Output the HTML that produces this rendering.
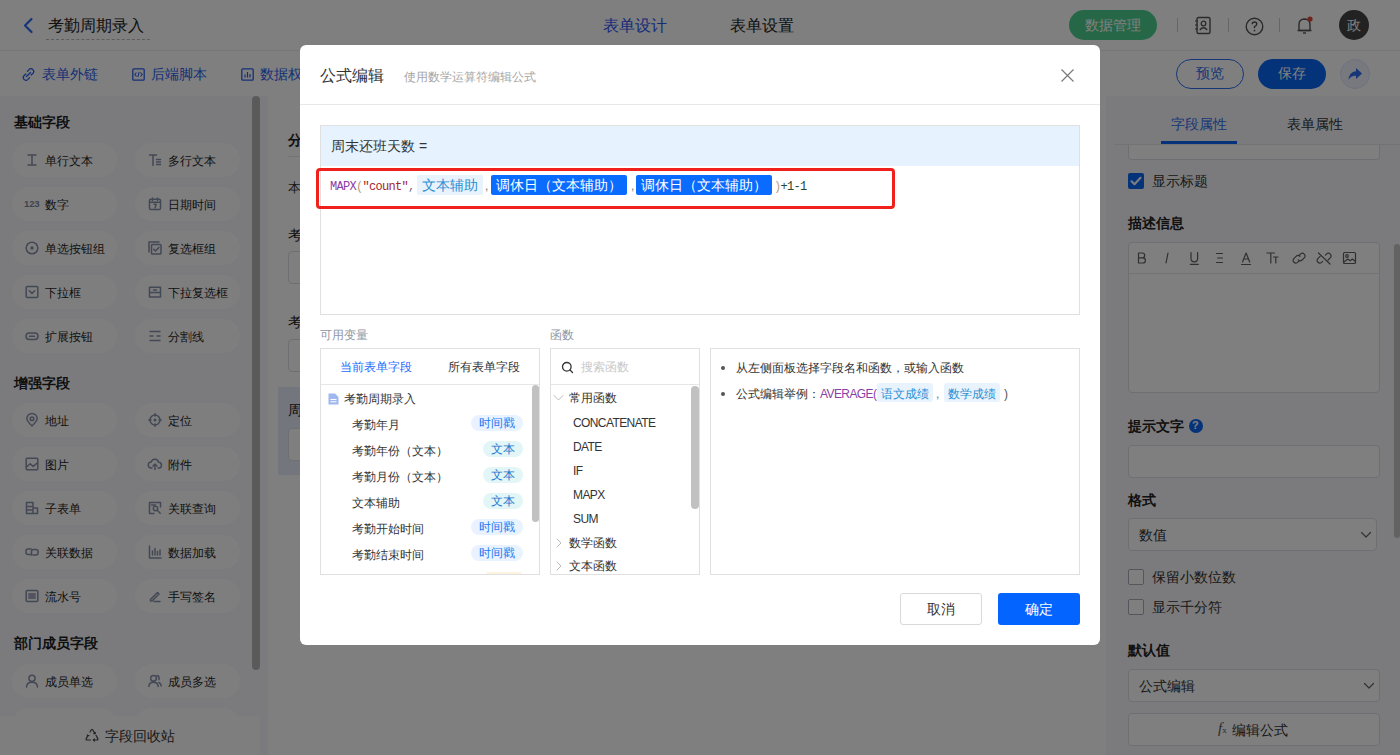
<!DOCTYPE html>
<html><head><meta charset="utf-8">
<style>
*{margin:0;padding:0;box-sizing:border-box}
html,body{width:1400px;height:755px;overflow:hidden;background:#fff;font-family:"Liberation Sans",sans-serif;color:#333}
.a{position:absolute}
.t{position:absolute;white-space:nowrap;line-height:1}
#page{position:absolute;left:0;top:0;width:1400px;height:755px;background:#fff}
#hdr{left:0;top:0;width:1400px;height:51px;border-bottom:1px solid #ececec;background:#fff}
#tb{left:0;top:0;width:1400px;height:96px}
#lp{left:0;top:96px;width:268px;height:659px;background:#f6f7fb}
.sec{font-size:14px;font-weight:bold;color:#1f1f1f}
.pill{position:absolute;width:105px;height:34px;border-radius:17px;background:#fdfdfe}
.pill span{position:absolute;left:33px;top:11px;font-size:12px;line-height:14px;color:#1f1f1f;white-space:nowrap}
.pill svg{position:absolute;left:13px;top:10px;overflow:visible}
#rp{left:1106px;top:96px;width:294px;height:659px;background:#f6f7fb}
#ov{left:0;top:0;width:1400px;height:755px;background:rgba(0,0,0,.5)}
#modal{left:300px;top:45px;width:800px;height:600px;background:#fff;border-radius:6px}
.badge{position:absolute;height:16px;border-radius:8px;font-size:12px;line-height:16px;text-align:center}
.bt{background:#e8f3ff;color:#1e78f0}
.bx{background:#e3f6f7;color:#1e78d0}
</style></head><body>
<div id="page">
  <div id="hdr" class="a">
    <svg class="a" style="left:21px;top:17px" width="14" height="17" viewBox="0 0 14 17"><path d="M10.5 2 L4 8.5 L10.5 15" fill="none" stroke="#2b6cf0" stroke-width="2.2" stroke-linecap="round" stroke-linejoin="round"/></svg>
    <div class="t" style="left:48px;top:18px;font-size:16px;color:#222">考勤周期录入</div>
    <div class="a" style="left:46px;top:39px;width:104px;border-top:1px dashed #bbb"></div>
    <div class="t" style="left:603px;top:18px;font-size:16px;color:#2f55f2">表单设计</div>
    <div class="t" style="left:730px;top:18px;font-size:16px;color:#222">表单设置</div>
    <div class="a" style="left:1069px;top:10px;width:88px;height:30px;border-radius:15px;background:#4ccf8e"></div>
    <div class="t" style="left:1085px;top:18px;font-size:14px;color:#fff">数据管理</div>
    <div class="a" style="left:1177px;top:18px;width:1px;height:14px;background:#ccc"></div>
    <div class="a" style="left:1228px;top:18px;width:1px;height:14px;background:#ccc"></div>
    <div class="a" style="left:1279px;top:18px;width:1px;height:14px;background:#ccc"></div>
    <svg class="a" style="left:1193px;top:16px" width="20" height="19" viewBox="0 0 20 19"><rect x="4" y="1.5" width="13" height="16" rx="1.5" fill="none" stroke="#555" stroke-width="1.4"/><circle cx="10.5" cy="7.5" r="2.3" fill="none" stroke="#555" stroke-width="1.3"/><path d="M6.8 14 Q10.5 9.5 14.2 14" fill="none" stroke="#555" stroke-width="1.3"/><path d="M2 5h3M2 9h3M2 13h3" stroke="#555" stroke-width="1.2"/></svg>
    <svg class="a" style="left:1245px;top:17px" width="19" height="19" viewBox="0 0 19 19"><circle cx="9.5" cy="9.5" r="8.3" fill="none" stroke="#555" stroke-width="1.4"/><path d="M7.2 7.3 Q7.2 5 9.5 5 Q11.8 5 11.8 7.1 Q11.8 8.6 9.5 9.6 L9.5 11.3" fill="none" stroke="#555" stroke-width="1.4"/><circle cx="9.5" cy="13.6" r="0.9" fill="#555"/></svg>
    <svg class="a" style="left:1296px;top:15px" width="18" height="20" viewBox="0 0 18 20"><path d="M3 15.5 L3 9.5 Q3 4.2 8.5 4 Q14 4.2 14 9.5 L14 15.5 Z" fill="none" stroke="#555" stroke-width="1.4" stroke-linejoin="round"/><path d="M1.5 15.5 H15.5" stroke="#555" stroke-width="1.4"/><path d="M7 18 H10" stroke="#555" stroke-width="1.4"/><circle cx="14" cy="4" r="2.6" fill="#e0443a"/></svg>
    <div class="a" style="left:1339px;top:10px;width:30px;height:30px;border-radius:15px;background:#444"></div>
    <div class="t" style="left:1347px;top:18px;font-size:14px;color:#fff">政</div>
  </div>
  <div id="tb" class="a">
    <svg class="a" style="left:22px;top:68px" width="13" height="13" viewBox="0 0 13 13"><path d="M5.5 3.2 L7.3 1.4 Q9 -0.2 10.9 1.6 Q12.6 3.5 11 5.2 L9.2 7 M7.5 9.8 L5.7 11.6 Q4 13.2 2.1 11.4 Q0.4 9.5 2 7.8 L3.8 6 M4.5 8.5 L8.5 4.5" fill="none" stroke="#2a5fec" stroke-width="1.3" stroke-linecap="round"/></svg>
    <div class="t" style="left:42px;top:67px;font-size:14px;color:#2a5fec">表单外链</div>
    <svg class="a" style="left:132px;top:68px" width="13" height="13" viewBox="0 0 13 13"><rect x="0.8" y="0.8" width="11.4" height="11.4" rx="1" fill="none" stroke="#2a5fec" stroke-width="1.3"/><path d="M4.5 4.5 L2.8 6.5 L4.5 8.5 M8.5 4.5 L10.2 6.5 L8.5 8.5 M7.2 3.8 L5.8 9.2" fill="none" stroke="#2a5fec" stroke-width="1.1"/></svg>
    <div class="t" style="left:151px;top:67px;font-size:14px;color:#2a5fec">后端脚本</div>
    <svg class="a" style="left:241px;top:68px" width="13" height="13" viewBox="0 0 13 13"><rect x="0.8" y="0.8" width="11.4" height="11.4" rx="1" fill="none" stroke="#2a5fec" stroke-width="1.3"/><path d="M4 9.5V6.5M6.5 9.5V4M9 9.5V6" stroke="#2a5fec" stroke-width="1.2"/></svg>
    <div class="t" style="left:260px;top:67px;font-size:14px;color:#2a5fec">数据权限</div>
    <div class="a" style="left:1176px;top:59px;width:68px;height:30px;border-radius:15px;border:1.5px solid #2f6cf0"></div>
    <div class="t" style="left:1196px;top:66px;font-size:14px;color:#2f6cf0">预览</div>
    <div class="a" style="left:1258px;top:59px;width:68px;height:30px;border-radius:15px;background:#0a66f5"></div>
    <div class="t" style="left:1278px;top:66px;font-size:14px;color:#fff">保存</div>
    <div class="a" style="left:1340px;top:59px;width:30px;height:30px;border-radius:15px;background:#eef3fe;border:1px solid #d9e4fb"></div>
    <svg class="a" style="left:1347px;top:66px" width="16" height="16" viewBox="0 0 16 16"><path d="M9 2 L15 7.5 L9 13 L9 9.8 Q4 9.5 1.5 14 Q2 6 9 5.2 Z" fill="#2f6cf0"/></svg>
  </div>
  <div id="lp" class="a">
<div class="t sec" style="left:14px;top:19px">基础字段</div>
<div class="pill" style="left:12px;top:47px"><svg width="14" height="14" viewBox="0 0 14 14"><path d="M3 2h8M3 12h8M7 2v10" fill="none" stroke="#8790aa" stroke-width="1.5" stroke-linecap="round" stroke-linejoin="round"/></svg><span>单行文本</span></div>
<div class="pill" style="left:135px;top:47px"><svg width="14" height="14" viewBox="0 0 14 14"><path d="M1.5 2h7M5 2v10.5M8.5 6.5h4M8.5 9h4M8.5 11.5h4" fill="none" stroke="#8790aa" stroke-width="1.5" stroke-linecap="round" stroke-linejoin="round"/></svg><span>多行文本</span></div>
<div class="pill" style="left:12px;top:91px"><svg width="14" height="14" viewBox="0 0 14 14"><text x="-1" y="10.3" font-size="9.6" font-weight="700" fill="#7d86a0" font-family="Liberation Sans" letter-spacing="-0.2">123</text></svg><span>数字</span></div>
<div class="pill" style="left:135px;top:91px"><svg width="14" height="14" viewBox="0 0 14 14"><rect x="1.5" y="2.2" width="11" height="10.3" rx="1.2" fill="none" stroke="#8790aa" stroke-width="1.5" stroke-linecap="round" stroke-linejoin="round"/><path d="M1.5 5.2h11M4.5 1v2.4M9.5 1v2.4M6 7.3h2.2l-1.2 3.6" fill="none" stroke="#8790aa" stroke-width="1.5" stroke-linecap="round" stroke-linejoin="round"/></svg><span>日期时间</span></div>
<div class="pill" style="left:12px;top:135px"><svg width="14" height="14" viewBox="0 0 14 14"><circle cx="7" cy="7" r="5.8" fill="none" stroke="#8790aa" stroke-width="1.5" stroke-linecap="round" stroke-linejoin="round"/><circle cx="7" cy="7" r="1.7" fill="#8790aa"/></svg><span>单选按钮组</span></div>
<div class="pill" style="left:135px;top:135px"><svg width="14" height="14" viewBox="0 0 14 14"><path d="M1 11V1h10" fill="none" stroke="#8790aa" stroke-width="1.5" stroke-linecap="round" stroke-linejoin="round"/><rect x="3.5" y="3.5" width="9.5" height="9.5" rx="0.8" fill="none" stroke="#8790aa" stroke-width="1.5" stroke-linecap="round" stroke-linejoin="round"/><path d="M5.7 8.2l1.8 1.8 3.4-3.6" fill="none" stroke="#8790aa" stroke-width="1.5" stroke-linecap="round" stroke-linejoin="round"/></svg><span>复选框组</span></div>
<div class="pill" style="left:12px;top:179px"><svg width="14" height="14" viewBox="0 0 14 14"><rect x="1.2" y="1.5" width="11.6" height="11" rx="1" fill="none" stroke="#8790aa" stroke-width="1.5" stroke-linecap="round" stroke-linejoin="round"/><path d="M4.3 5.8l2.7 2.6 2.7-2.6" fill="none" stroke="#8790aa" stroke-width="1.5" stroke-linecap="round" stroke-linejoin="round"/></svg><span>下拉框</span></div>
<div class="pill" style="left:135px;top:179px"><svg width="14" height="14" viewBox="0 0 14 14"><path d="M1.5 7.5V2.3h11v5.2M1.5 7.5h11v4.5h-11z" fill="none" stroke="#8790aa" stroke-width="1.5" stroke-linecap="round" stroke-linejoin="round"/><path d="M5.5 5h3" fill="none" stroke="#8790aa" stroke-width="1.5" stroke-linecap="round" stroke-linejoin="round"/></svg><span>下拉复选框</span></div>
<div class="pill" style="left:12px;top:223px"><svg width="14" height="14" viewBox="0 0 14 14"><rect x="1" y="4" width="12" height="6.5" rx="3.2" fill="none" stroke="#8790aa" stroke-width="1.5" stroke-linecap="round" stroke-linejoin="round"/><path d="M4.5 7.2h5" fill="none" stroke="#8790aa" stroke-width="1.5" stroke-linecap="round" stroke-linejoin="round"/></svg><span>扩展按钮</span></div>
<div class="pill" style="left:135px;top:223px"><svg width="14" height="14" viewBox="0 0 14 14"><path d="M2 2.5h10M2 7h3M9 7h3M2 11.5h10" fill="none" stroke="#8790aa" stroke-width="1.5" stroke-linecap="round" stroke-linejoin="round"/></svg><span>分割线</span></div>
<div class="t sec" style="left:14px;top:280px">增强字段</div>
<div class="pill" style="left:12px;top:307px"><svg width="14" height="14" viewBox="0 0 14 14"><path d="M7 13Q1.8 8 1.8 5.6A5.2 5.2 0 0 1 12.2 5.6Q12.2 8 7 13Z" fill="none" stroke="#8790aa" stroke-width="1.5" stroke-linecap="round" stroke-linejoin="round"/><circle cx="7" cy="5.7" r="1.8" fill="none" stroke="#8790aa" stroke-width="1.5" stroke-linecap="round" stroke-linejoin="round"/></svg><span>地址</span></div>
<div class="pill" style="left:135px;top:307px"><svg width="14" height="14" viewBox="0 0 14 14"><circle cx="7" cy="7" r="5" fill="none" stroke="#8790aa" stroke-width="1.5" stroke-linecap="round" stroke-linejoin="round"/><circle cx="7" cy="7" r="1.5" fill="#8790aa"/><path d="M7 0.8v2.2M7 11v2.2M0.8 7h2.2M11 7h2.2" fill="none" stroke="#8790aa" stroke-width="1.5" stroke-linecap="round" stroke-linejoin="round"/></svg><span>定位</span></div>
<div class="pill" style="left:12px;top:351px"><svg width="14" height="14" viewBox="0 0 14 14"><rect x="1.2" y="1.2" width="11.6" height="11.6" rx="1" fill="none" stroke="#8790aa" stroke-width="1.5" stroke-linecap="round" stroke-linejoin="round"/><path d="M1.5 10l3.7-3.2 3 2.6 4-3.4" fill="none" stroke="#8790aa" stroke-width="1.5" stroke-linecap="round" stroke-linejoin="round"/></svg><span>图片</span></div>
<div class="pill" style="left:135px;top:351px"><svg width="14" height="14" viewBox="0 0 14 14"><path d="M4 11H3.3A3 3 0 0 1 3.2 5A3.8 3.8 0 0 1 10.6 5.3A2.8 2.8 0 0 1 10.6 11H10M7 12.5V7M5 9L7 7 9 9" fill="none" stroke="#8790aa" stroke-width="1.5" stroke-linecap="round" stroke-linejoin="round"/></svg><span>附件</span></div>
<div class="pill" style="left:12px;top:395px"><svg width="14" height="14" viewBox="0 0 14 14"><path d="M1.5 12.5V1.5h6.5v11M1.5 5.5h6.5M1.5 9h6.5M8 7h4.5v5.5h-11" fill="none" stroke="#8790aa" stroke-width="1.5" stroke-linecap="round" stroke-linejoin="round"/></svg><span>子表单</span></div>
<div class="pill" style="left:135px;top:395px"><svg width="14" height="14" viewBox="0 0 14 14"><path d="M12.5 6V1.5h-11v11H6" fill="none" stroke="#8790aa" stroke-width="1.5" stroke-linecap="round" stroke-linejoin="round"/><circle cx="7.5" cy="7.5" r="2.2" fill="none" stroke="#8790aa" stroke-width="1.5" stroke-linecap="round" stroke-linejoin="round"/><path d="M9.2 9.2l3 3" fill="none" stroke="#8790aa" stroke-width="1.5" stroke-linecap="round" stroke-linejoin="round"/><path d="M3.5 4h4" fill="none" stroke="#8790aa" stroke-width="1.5" stroke-linecap="round" stroke-linejoin="round"/></svg><span>关联查询</span></div>
<div class="pill" style="left:12px;top:439px"><svg width="14" height="14" viewBox="0 0 14 14"><path d="M6 4H3a2 2 0 0 0-2 2v1.5a2 2 0 0 0 2 2h2.5M8 10h3a2 2 0 0 0 2-2V6.5a2 2 0 0 0-2-2H8.5a2 2 0 0 0-2 2V10" fill="none" stroke="#8790aa" stroke-width="1.5" stroke-linecap="round" stroke-linejoin="round"/></svg><span>关联数据</span></div>
<div class="pill" style="left:135px;top:439px"><svg width="14" height="14" viewBox="0 0 14 14"><path d="M1.5 1v12h11.5M4.5 10V6M7 10V3.5M9.5 10V6.5M12 10V5" fill="none" stroke="#8790aa" stroke-width="1.5" stroke-linecap="round" stroke-linejoin="round"/></svg><span>数据加载</span></div>
<div class="pill" style="left:12px;top:483px"><svg width="14" height="14" viewBox="0 0 14 14"><rect x="1.2" y="1.5" width="11.6" height="11" rx="1" fill="none" stroke="#8790aa" stroke-width="1.5" stroke-linecap="round" stroke-linejoin="round"/><path d="M3.8 5h6.4M3.8 7h6.4M3.8 9h6.4" fill="none" stroke="#8790aa" stroke-width="1.5" stroke-linecap="round" stroke-linejoin="round"/></svg><span>流水号</span></div>
<div class="pill" style="left:135px;top:483px"><svg width="14" height="14" viewBox="0 0 14 14"><path d="M2.5 10.5L9.5 3.5 11 5 4 12H2.5ZM6 12.5h6" fill="none" stroke="#8790aa" stroke-width="1.5" stroke-linecap="round" stroke-linejoin="round"/></svg><span>手写签名</span></div>
<div class="t sec" style="left:14px;top:540px">部门成员字段</div>
<div class="pill" style="left:12px;top:568px"><svg width="14" height="14" viewBox="0 0 14 14"><circle cx="7" cy="4.3" r="3.1" fill="none" stroke="#8790aa" stroke-width="1.5" stroke-linecap="round" stroke-linejoin="round"/><path d="M1.5 13Q1.8 8.3 7 8.3Q12.2 8.3 12.5 13" fill="none" stroke="#8790aa" stroke-width="1.5" stroke-linecap="round" stroke-linejoin="round"/></svg><span>成员单选</span></div>
<div class="pill" style="left:135px;top:568px"><svg width="14" height="14" viewBox="0 0 14 14"><circle cx="5.5" cy="4.3" r="2.9" fill="none" stroke="#8790aa" stroke-width="1.5" stroke-linecap="round" stroke-linejoin="round"/><path d="M0.8 12.5Q1.1 8.3 5.5 8.3Q9.9 8.3 10.2 12.5M9 1.6Q11.6 2.2 11 5.6M10.8 8.5Q13 9.3 13.2 12" fill="none" stroke="#8790aa" stroke-width="1.5" stroke-linecap="round" stroke-linejoin="round"/></svg><span>成员多选</span></div>
<div class="pill" style="left:12px;top:612px"><svg width="14" height="14" viewBox="0 0 14 14"></svg><span></span></div>
<div class="pill" style="left:135px;top:612px"><svg width="14" height="14" viewBox="0 0 14 14"></svg><span></span></div>
<div class="a" style="left:252px;top:0;width:8px;height:574px;border-radius:4px;background:#b5b5b5"></div>
<div class="a" style="left:0;top:620px;width:260px;height:39px;background:#fdfdfe"></div>
<svg class="a" style="left:85px;top:633px" width="14" height="13" viewBox="0 0 14 13"><path d="M5 3L6.2 1Q7 0 7.8 1L9.8 4.4M11 6.3L12.8 9.6Q13.2 11 12 11H8.5M5.5 11H2Q0.8 11 1.2 9.6L2.8 6.8" fill="none" stroke="#444" stroke-width="1.2" stroke-linejoin="round" stroke-linecap="round"/><path d="M8.3 4.6l1.7 0.2 0.4-1.8M9.8 9.8L8.3 11l1.5 1.3M2 5.5l0.8 1.4 1.6-0.6" fill="none" stroke="#444" stroke-width="1.1" stroke-linejoin="round"/></svg>
<div class="t" style="left:105px;top:632px;font-size:14px;line-height:16px;color:#333">字段回收站</div>
</div>
  <div class="a" style="left:268px;top:96px;width:838px;height:659px;background:#fff"></div>
  <div class="t" style="left:288px;top:133px;font-size:14px;font-weight:bold;color:#222">分组标题</div>
  <div class="a" style="left:288px;top:156px;width:800px;height:1px;background:#e8e8e8"></div>
  <div class="t" style="left:288px;top:181px;font-size:13px;color:#333">本组</div>
  <div class="t" style="left:288px;top:228px;font-size:14px;color:#1a1a1a">考勤</div>
  <div class="a" style="left:288px;top:251px;width:300px;height:33px;border:1px solid #dcdfe6;border-radius:4px;background:#fff"></div>
  <div class="t" style="left:288px;top:315px;font-size:14px;color:#1a1a1a">考勤</div>
  <div class="a" style="left:288px;top:339px;width:300px;height:33px;border:1px solid #dcdfe6;border-radius:4px;background:#fff"></div>
  <div class="a" style="left:278px;top:387px;width:810px;height:88px;background:#e7edfa"></div>
  <div class="t" style="left:288px;top:403px;font-size:14px;color:#1a1a1a">周末</div>
  <div class="a" style="left:288px;top:428px;width:300px;height:33px;border:1px solid #dcdfe6;border-radius:4px;background:#fff"></div>
  <div id="rp" class="a">
    
    <div class="t" style="left:65px;top:21px;font-size:14px;color:#2f6cf0">字段属性</div>
    <div class="t" style="left:181px;top:21px;font-size:14px;color:#333">表单属性</div>
    <div class="a" style="left:8px;top:48px;width:286px;height:1px;background:#e4e6eb"></div>
    <div class="a" style="left:55px;top:45px;width:76px;height:3px;background:#0a66f5"></div>
    <div class="a" style="left:22px;top:49px;width:252px;height:15px;border:1px solid #dcdfe6;border-top:none;border-radius:0 0 4px 4px;background:#fff"></div>
    <div class="a" style="left:22px;top:77px;width:16px;height:16px;border-radius:2px;background:#0a66f5"></div>
    <svg class="a" style="left:22px;top:77px" width="16" height="16" viewBox="0 0 16 16"><path d="M3.5 8.2l3 3 6-6.5" fill="none" stroke="#fff" stroke-width="2" stroke-linecap="round" stroke-linejoin="round"/></svg>
    <div class="t" style="left:46px;top:78px;font-size:14px;color:#333">显示标题</div>
    <div class="t" style="left:22px;top:120px;font-size:14px;font-weight:bold;color:#222">描述信息</div>
    <div class="a" style="left:22px;top:146px;width:252px;height:151px;border:1px solid #dcdfe6;border-radius:4px;background:#fff"></div>
    <div class="a" style="left:23px;top:177px;width:250px;height:1px;background:#e4e6eb"></div>
    <svg class="a" style="left:22px;top:146px" width="252" height="31" viewBox="0 0 252 31">
      <path d="M10.5 11h3.8a2.4 2.4 0 0 1 0 4.8h-3.8zM10.5 15.8h4.3a2.6 2.6 0 0 1 0 5.2h-4.3z" fill="none" stroke="#606060" stroke-width="1.2" stroke-linecap="round" stroke-linejoin="round"/>
      <path d="M40 11l-2 10" fill="none" stroke="#606060" stroke-width="1.2" stroke-linecap="round" stroke-linejoin="round" stroke-width="1.5"/>
      <path d="M63 10.5v6a3.3 3.3 0 0 0 6.6 0v-6M62.3 22.3h8" fill="none" stroke="#606060" stroke-width="1.2" stroke-linecap="round" stroke-linejoin="round"/>
      <path d="M88.5 11.5h6M89.5 16h5M88.5 20.5h6" fill="none" stroke="#606060" stroke-width="1.2" stroke-linecap="round" stroke-linejoin="round"/>
      <path d="M114.5 20l3.6-9 3.6 9M115.8 17h4.6M113.5 22.5h9" fill="none" stroke="#606060" stroke-width="1.2" stroke-linecap="round" stroke-linejoin="round"/>
      <path d="M139 11h7.5M142.8 11v10M145.5 15h4.5M147.8 15v6" fill="none" stroke="#606060" stroke-width="1.2" stroke-linecap="round" stroke-linejoin="round" stroke-width="1.5"/>
      <path d="M171.5 13l1.1-1.1a2.7 2.7 0 0 1 3.8 3.8l-2.3 2.3a2.7 2.7 0 0 1-3.8 0M170.7 19.3l-1.1 1.1a2.7 2.7 0 0 1-3.8-3.8l2.3-2.3a2.7 2.7 0 0 1 3.8 0" fill="none" stroke="#606060" stroke-width="1.2" stroke-linecap="round" stroke-linejoin="round"/>
      <path d="M197.5 13l1.1-1.1a2.7 2.7 0 0 1 3.8 3.8l-2.3 2.3M194.7 19.3l-1.1 1.1a2.7 2.7 0 0 1-3.8-3.8l2.3-2.3M190.5 11l11.5 11" fill="none" stroke="#606060" stroke-width="1.2" stroke-linecap="round" stroke-linejoin="round"/>
      <rect x="215.5" y="10.5" width="12" height="11" rx="1" fill="none" stroke="#606060" stroke-width="1.2" stroke-linecap="round" stroke-linejoin="round"/><circle cx="219" cy="14" r="1.3" fill="none" stroke="#606060" stroke-width="1.2" stroke-linecap="round" stroke-linejoin="round"/><path d="M216 20l3.8-3 2.4 1.7 2.2-1.7 3 2.5" fill="none" stroke="#606060" stroke-width="1.2" stroke-linecap="round" stroke-linejoin="round"/>
    </svg>
    <div class="t" style="left:22px;top:323px;font-size:14px;font-weight:bold;color:#222">提示文字</div>
    <div class="a" style="left:83px;top:323px;width:14px;height:14px;border-radius:7px;background:#0a66f5"></div>
    <div class="t" style="left:86px;top:324px;font-size:11px;font-weight:bold;color:#fff">?</div>
    <div class="a" style="left:22px;top:349px;width:252px;height:33px;border:1px solid #dcdfe6;border-radius:4px;background:#fff"></div>
    <div class="t" style="left:22px;top:397px;font-size:14px;font-weight:bold;color:#222">格式</div>
    <div class="a" style="left:22px;top:422px;width:249px;height:33px;border:1px solid #dcdfe6;border-radius:4px;background:#fff"></div>
    <div class="t" style="left:33px;top:432px;font-size:14px;color:#333">数值</div>
    <svg class="a" style="left:254px;top:435px" width="12" height="8" viewBox="0 0 12 8"><path d="M1.5 1.5l4.5 4.5 4.5-4.5" fill="none" stroke="#666" stroke-width="1.2" stroke-linecap="round" stroke-linejoin="round"/></svg>
    <div class="a" style="left:22px;top:473px;width:16px;height:16px;border:1px solid #a9adb8;border-radius:2px;background:#fff"></div>
    <div class="t" style="left:46px;top:474px;font-size:14px;color:#333">保留小数位数</div>
    <div class="a" style="left:22px;top:503px;width:16px;height:16px;border:1px solid #a9adb8;border-radius:2px;background:#fff"></div>
    <div class="t" style="left:46px;top:504px;font-size:14px;color:#333">显示千分符</div>
    <div class="t" style="left:22px;top:547px;font-size:14px;font-weight:bold;color:#222">默认值</div>
    <div class="a" style="left:22px;top:573px;width:252px;height:33px;border:1px solid #dcdfe6;border-radius:4px;background:#fff"></div>
    <div class="t" style="left:33px;top:583px;font-size:14px;color:#333">公式编辑</div>
    <svg class="a" style="left:257px;top:586px" width="12" height="8" viewBox="0 0 12 8"><path d="M1.5 1.5l4.5 4.5 4.5-4.5" fill="none" stroke="#666" stroke-width="1.2" stroke-linecap="round" stroke-linejoin="round"/></svg>
    <div class="a" style="left:22px;top:617px;width:252px;height:33px;border:1px solid #dcdfe6;border-radius:4px;background:#fff"></div>
    <div class="t" style="left:112px;top:625px;font-size:15px;font-style:italic;color:#555;font-family:'Liberation Serif'">f<span style="font-size:9px;font-style:normal">x</span></div>
    <div class="t" style="left:126px;top:627px;font-size:14px;color:#333">编辑公式</div>
    <div class="a" style="left:288px;top:148px;width:6px;height:294px;border-radius:3px;background:#c4c4c4"></div>
  </div>
</div>
<div id="ov" class="a"></div>
<div id="modal" class="a">
  <div class="t" style="left:20px;top:22px;font-size:16px;line-height:18px;color:#333">公式编辑</div>
  <div class="t" style="left:104px;top:25px;font-size:12px;line-height:14px;color:#a6a6a6">使用数学运算符编辑公式</div>
  <svg class="a" style="left:760px;top:23px" width="15" height="15" viewBox="0 0 15 15"><path d="M1.5 1.5l12 12M13.5 1.5l-12 12" fill="none" stroke="#7a7a7a" stroke-width="1.2"/></svg>
  <div class="a" style="left:0px;top:59px;width:800px;height:1px;background:#e8e8e8"></div>
  <div class="a" style="left:20px;top:80px;width:760px;height:190px;border:1px solid #e0e0e0;background:#fff"></div>
  <div class="a" style="left:21px;top:81px;width:758px;height:40px;background:#e6f3fe"></div>
  <div class="t" style="left:31px;top:93px;font-size:14px;line-height:16px;color:#333">周末还班天数 =</div>
  <div class="t" style="left:30px;top:135px;font-size:12px;line-height:14px;font-family:'Liberation Mono',monospace;letter-spacing:-0.7px"><span style="color:#8a3ea6">MAPX</span><span style="color:#b8a07a">(</span><span style="color:#a51d2d">"count"</span><span style="color:#777">,</span></div>
  <div class="a" style="left:117px;top:130px;width:66px;height:20px;border-radius:2px;background:#e8f3fd"></div>
  <div class="t" style="left:122px;top:132px;font-size:14px;line-height:16px;color:#2a8fd4">文本辅助</div>
  <div class="t" style="left:185px;top:134px;font-size:12px;line-height:14px;color:#777">,</div>
  <div class="a" style="left:191px;top:130px;width:136px;height:20px;border-radius:2px;background:#0a6cff"></div>
  <div class="t" style="left:196px;top:132px;font-size:14px;line-height:16px;color:#fff">调休日（文本辅助）</div>
  <div class="t" style="left:331px;top:134px;font-size:12px;line-height:14px;color:#777">,</div>
  <div class="a" style="left:336px;top:130px;width:136px;height:20px;border-radius:2px;background:#0a6cff"></div>
  <div class="t" style="left:341px;top:132px;font-size:14px;line-height:16px;color:#fff">调休日（文本辅助）</div>
  <div class="t" style="left:474px;top:135px;font-size:12px;line-height:14px;font-family:'Liberation Mono',monospace;letter-spacing:-0.7px"><span style="color:#b8a07a">)</span><span style="color:#1f4a30">+1-1</span></div>
  <div class="a" style="left:16px;top:123px;width:579px;height:41px;border:3px solid #f0201c;border-radius:4px"></div>

  <div class="t" style="left:20px;top:283px;font-size:12px;line-height:14px;color:#8e96a4">可用变量</div>
  <div class="a" style="left:20px;top:303px;width:220px;height:227px;border:1px solid #e0e0e0"></div>
  <div class="a" style="left:21px;top:339px;width:218px;height:1px;background:#e6e6e6"></div>
  <div class="t" style="left:40px;top:315px;font-size:12px;line-height:14px;color:#1f6bff">当前表单字段</div>
  <div class="t" style="left:148px;top:315px;font-size:12px;line-height:14px;color:#333">所有表单字段</div>
  <svg class="a" style="left:28px;top:348px" width="11" height="12" viewBox="0 0 11 12"><path d="M0.5 0.5h6.5l3.5 3.5v7.5h-10z" fill="#9fb8f0"/><path d="M2.5 6.5h6M2.5 8.8h6" stroke="#fff" stroke-width="1"/></svg>
  <div class="t" style="left:44px;top:347px;font-size:12px;line-height:14px;color:#333">考勤周期录入</div>
  <div class="t" style="left:52px;top:373px;font-size:12px;line-height:14px;color:#333">考勤年月</div><div class="badge bt" style="left:171px;top:370px;width:52px">时间戳</div><div class="t" style="left:52px;top:399px;font-size:12px;line-height:14px;color:#333">考勤年份（文本）</div><div class="badge bx" style="left:183px;top:396px;width:40px">文本</div><div class="t" style="left:52px;top:425px;font-size:12px;line-height:14px;color:#333">考勤月份（文本）</div><div class="badge bx" style="left:183px;top:422px;width:40px">文本</div><div class="t" style="left:52px;top:451px;font-size:12px;line-height:14px;color:#333">文本辅助</div><div class="badge bx" style="left:183px;top:448px;width:40px">文本</div><div class="t" style="left:52px;top:477px;font-size:12px;line-height:14px;color:#333">考勤开始时间</div><div class="badge bt" style="left:171px;top:474px;width:52px">时间戳</div><div class="t" style="left:52px;top:503px;font-size:12px;line-height:14px;color:#333">考勤结束时间</div><div class="badge bt" style="left:171px;top:500px;width:52px">时间戳</div><div class="badge" style="left:186px;top:527px;width:36px;height:2px;border-radius:8px 8px 0 0;background:#fdf3e1"></div>
  <div class="a" style="left:232px;top:340px;width:7px;height:137px;border-radius:4px;background:#c1c1c1"></div>

  <div class="t" style="left:250px;top:283px;font-size:12px;line-height:14px;color:#8e96a4">函数</div>
  <div class="a" style="left:250px;top:303px;width:150px;height:227px;border:1px solid #e0e0e0"></div>
  <div class="a" style="left:251px;top:339px;width:148px;height:1px;background:#e6e6e6"></div>
  <svg class="a" style="left:261px;top:316px" width="13" height="13" viewBox="0 0 13 13"><circle cx="5.8" cy="5.8" r="4.3" fill="none" stroke="#333" stroke-width="1.3"/><path d="M9 9l2.5 2.5" stroke="#333" stroke-width="1.3" stroke-linecap="round"/></svg>
  <div class="t" style="left:281px;top:315px;font-size:12px;line-height:14px;color:#c8c8c8">搜索函数</div>
  <svg class="a" style="left:253px;top:349px" width="11" height="8" viewBox="0 0 11 8"><path d="M1 1.5l4.5 4.5 4.5-4.5" fill="none" stroke="#bbb" stroke-width="1" stroke-linecap="round" stroke-linejoin="round"/></svg>
  <div class="t" style="left:269px;top:346px;font-size:12px;line-height:14px;color:#333">常用函数</div>
  <div class="t" style="left:273px;top:370.5px;font-size:12px;line-height:14px;color:#333;letter-spacing:-0.6px">CONCATENATE</div><div class="t" style="left:273px;top:394.5px;font-size:12px;line-height:14px;color:#333;letter-spacing:-0.6px">DATE</div><div class="t" style="left:273px;top:418.5px;font-size:12px;line-height:14px;color:#333;letter-spacing:-0.6px">IF</div><div class="t" style="left:273px;top:442.5px;font-size:12px;line-height:14px;color:#333;letter-spacing:-0.6px">MAPX</div><div class="t" style="left:273px;top:466.5px;font-size:12px;line-height:14px;color:#333;letter-spacing:-0.6px">SUM</div>
  <svg class="a" style="left:256px;top:493px" width="6" height="10" viewBox="0 0 6 10"><path d="M1 1l4 4-4 4" fill="none" stroke="#bbb" stroke-width="1" stroke-linecap="round" stroke-linejoin="round"/></svg>
  <div class="t" style="left:269px;top:491px;font-size:12px;line-height:14px;color:#333">数学函数</div>
  <svg class="a" style="left:256px;top:516px" width="6" height="10" viewBox="0 0 6 10"><path d="M1 1l4 4-4 4" fill="none" stroke="#bbb" stroke-width="1" stroke-linecap="round" stroke-linejoin="round"/></svg>
  <div class="t" style="left:269px;top:514px;font-size:12px;line-height:14px;color:#333">文本函数</div>
  <div class="a" style="left:391px;top:341px;width:8px;height:123px;border-radius:4px;background:#c1c1c1"></div>

  <div class="a" style="left:410px;top:303px;width:370px;height:227px;border:1px solid #e0e0e0"></div>
  <div class="a" style="left:421px;top:321px;width:4px;height:4px;border-radius:2px;background:#555"></div>
  <div class="t" style="left:436px;top:316px;font-size:12px;line-height:14px;color:#333">从左侧面板选择字段名和函数，或输入函数</div>
  <div class="a" style="left:421px;top:347px;width:4px;height:4px;border-radius:2px;background:#555"></div>
  <div class="t" style="left:436px;top:342px;font-size:12px;line-height:14px;color:#333">公式编辑举例：<span style="color:#8a3ea6;letter-spacing:-0.6px">AVERAGE(</span></div>
  <div class="a" style="left:577px;top:338px;width:56px;height:19px;border-radius:3px;background:#e8f3fd"></div>
  <div class="t" style="left:581px;top:342px;font-size:12px;line-height:14px;color:#2a8fd4">语文成绩</div>
  <div class="t" style="left:636px;top:342px;font-size:12px;line-height:14px;color:#777">,</div>
  <div class="a" style="left:644px;top:338px;width:56px;height:19px;border-radius:3px;background:#e8f3fd"></div>
  <div class="t" style="left:648px;top:342px;font-size:12px;line-height:14px;color:#2a8fd4">数学成绩</div>
  <div class="t" style="left:704px;top:342px;font-size:12px;line-height:14px;color:#555">)</div>

  <div class="a" style="left:600px;top:548px;width:82px;height:32px;border:1px solid #d9d9d9;border-radius:3px;background:#fff"></div>
  <div class="t" style="left:627px;top:556px;font-size:14px;line-height:16px;color:#333">取消</div>
  <div class="a" style="left:698px;top:548px;width:82px;height:32px;border-radius:3px;background:#0364ff"></div>
  <div class="t" style="left:725px;top:556px;font-size:14px;line-height:16px;color:#fff">确定</div>
</div>
</body></html>
